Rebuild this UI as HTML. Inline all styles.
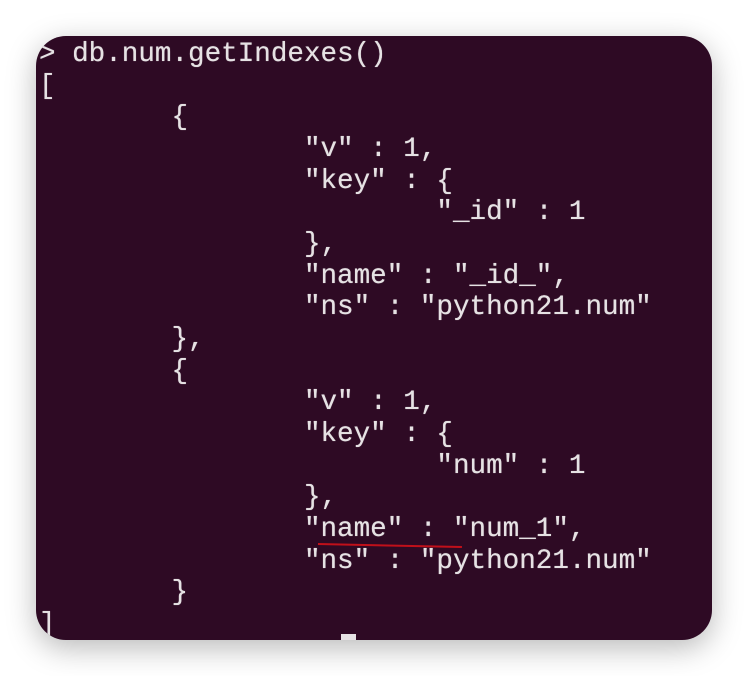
<!DOCTYPE html>
<html><head><meta charset="utf-8"><style>
html,body{margin:0;padding:0;background:#fff;width:748px;height:676px;overflow:hidden}
.panel{position:absolute;left:36px;top:36px;width:676px;height:604px;background:#2e0a24;border-radius:30px;overflow:hidden;box-shadow:0 8px 30px rgba(0,0,0,0.28)}
pre{position:absolute;left:3px;top:3px;margin:0;font-family:"Liberation Mono",monospace;font-size:27.6px;line-height:31.65px;color:#e6e2e4;white-space:pre;text-shadow:0 0 0.6px #e6e2e4}
.ul{position:absolute;left:282px;top:507px;width:144px;height:2px;background:#c0101a;transform:rotate(1.2deg);transform-origin:0 0}
.cur{position:absolute;left:305px;top:598px;width:15px;height:8px;background:#e6e2e4}
</style></head><body>
<div class="panel">
<pre>&gt; db.num.getIndexes()
[
        {
                "v" : 1,
                "key" : {
                        "_id" : 1
                },
                "name" : "_id_",
                "ns" : "python21.num"
        },
        {
                "v" : 1,
                "key" : {
                        "num" : 1
                },
                "name" : "num_1",
                "ns" : "python21.num"
        }
]</pre>
<div class="ul"></div>
<div class="cur"></div>
</div>
</body></html>
